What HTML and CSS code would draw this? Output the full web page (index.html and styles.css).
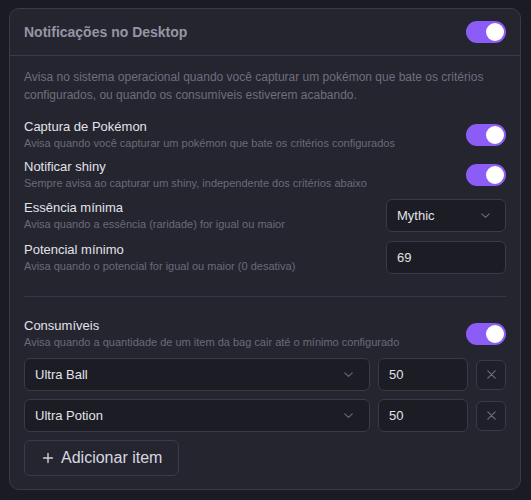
FILE: index.html
```html
<!DOCTYPE html>
<html lang="pt-BR">
<head>
<meta charset="utf-8">
<title>Notificações no Desktop</title>
<link rel="stylesheet" href="styles.css">
</head>
<body>
<section class="card">
  <header class="card-header">
    <h2 class="title">Notificações no Desktop</h2>
    <span class="toggle on"><span class="knob"></span></span>
  </header>
  <div class="card-body">
    <p class="desc">Avisa no sistema operacional quando você capturar um pokémon que bate os critérios configurados, ou quando os consumíveis estiverem acabando.</p>

    <div class="settings">
      <div class="row">
        <div class="text">
          <div class="label">Captura de Pokémon</div>
          <div class="sub">Avisa quando você capturar um pokémon que bate os critérios configurados</div>
        </div>
        <span class="toggle on"><span class="knob"></span></span>
      </div>
      <div class="row">
        <div class="text">
          <div class="label">Notificar shiny</div>
          <div class="sub">Sempre avisa ao capturar um shiny, independente dos critérios abaixo</div>
        </div>
        <span class="toggle on"><span class="knob"></span></span>
      </div>
      <div class="row">
        <div class="text">
          <div class="label">Essência mínima</div>
          <div class="sub">Avisa quando a essência (raridade) for igual ou maior</div>
        </div>
        <div class="select small">
          <span>Mythic</span>
          <svg class="chev" width="9" height="5" viewBox="0 0 9 5"><path d="M0.8 0.8l3.7 3.5 3.7-3.5" fill="none" stroke="#6c6c7a" stroke-width="1.1" stroke-linecap="round" stroke-linejoin="round"/></svg>
        </div>
      </div>
      <div class="row spaced">
        <div class="text">
          <div class="label">Potencial mínimo</div>
          <div class="sub">Avisa quando o potencial for igual ou maior (0 desativa)</div>
        </div>
        <input class="field small" type="text" value="69">
      </div>
    </div>

    <div class="divider"></div>

    <div class="settings">
      <div class="row">
        <div class="text">
          <div class="label">Consumíveis</div>
          <div class="sub">Avisa quando a quantidade de um item da bag cair até o mínimo configurado</div>
        </div>
        <span class="toggle on"><span class="knob"></span></span>
      </div>
      <div class="item-row">
        <div class="select grow">
          <span>Ultra Ball</span>
          <svg class="chev" width="9" height="5" viewBox="0 0 9 5"><path d="M0.8 0.8l3.7 3.5 3.7-3.5" fill="none" stroke="#6c6c7a" stroke-width="1.1" stroke-linecap="round" stroke-linejoin="round"/></svg>
        </div>
        <input class="field qty" type="text" value="50">
        <button class="remove" type="button" aria-label="Remover">
          <svg width="9" height="9" viewBox="0 0 9 9"><path d="M0.8 0.8l7.4 7.4M8.2 0.8l-7.4 7.4" fill="none" stroke="#6c6c7a" stroke-width="1.2" stroke-linecap="round"/></svg>
        </button>
      </div>
      <div class="item-row">
        <div class="select grow">
          <span>Ultra Potion</span>
          <svg class="chev" width="9" height="5" viewBox="0 0 9 5"><path d="M0.8 0.8l3.7 3.5 3.7-3.5" fill="none" stroke="#6c6c7a" stroke-width="1.1" stroke-linecap="round" stroke-linejoin="round"/></svg>
        </div>
        <input class="field qty" type="text" value="50">
        <button class="remove" type="button" aria-label="Remover">
          <svg width="9" height="9" viewBox="0 0 9 9"><path d="M0.8 0.8l7.4 7.4M8.2 0.8l-7.4 7.4" fill="none" stroke="#6c6c7a" stroke-width="1.2" stroke-linecap="round"/></svg>
        </button>
      </div>
      <div class="add-wrap">
        <button class="add" type="button">
          <svg width="14" height="14" viewBox="0 0 14 14"><path d="M7 2.5v9M2.5 7h9" fill="none" stroke="#cfcfd8" stroke-width="1.4" stroke-linecap="round"/></svg>
          <span>Adicionar item</span>
        </button>
      </div>
    </div>
  </div>
</section>
</body>
</html>
```
FILE: styles.css
```css
* { box-sizing: border-box; }

html, body {
  background: #1b1b24;
}

body {
  margin: 0;
  padding: 8px 10px 0 9px;
  font-family: "Liberation Sans", Arial, sans-serif;
  color: #e2e2e8;
}

.card {
  background: #252530;
  border: 1px solid #3a3a48;
  border-radius: 10px;
}

.card-header {
  display: flex;
  align-items: center;
  justify-content: space-between;
  padding: 12px 14px;
  border-bottom: 1px solid #3a3a48;
}

.title {
  margin: 0;
  font-size: 14px;
  font-weight: bold;
  color: #9595a3;
  line-height: 22px;
}

.card-body {
  padding: 12px 14px 13px;
}

.desc {
  margin: 0 0 15px;
  font-size: 12px;
  line-height: 18px;
  color: #6e6e7c;
}

.settings {
  display: flex;
  flex-direction: column;
  gap: 8px;
}

.row {
  display: flex;
  align-items: center;
  justify-content: space-between;
  min-height: 32px;
}

.row.spaced {
  margin-top: 1px;
}

.label {
  font-size: 13px;
  line-height: 16px;
  color: #e2e2e8;
}

.sub {
  font-size: 11px;
  line-height: 16px;
  color: #6a6a78;
}

.toggle {
  flex: none;
  position: relative;
  width: 40px;
  height: 22px;
  border-radius: 11px;
  background: #3a3a48;
}

.toggle.on {
  background: #8b5cf6;
}

.knob {
  position: absolute;
  top: 2px;
  left: 2px;
  width: 18px;
  height: 18px;
  border-radius: 50%;
  background: #ffffff;
}

.toggle.on .knob {
  left: 20px;
}

.select, .field {
  height: 33px;
  background: #1c1c25;
  border: 1px solid #3a3a48;
  border-radius: 6px;
  font-family: "Liberation Sans", Arial, sans-serif;
  font-size: 13px;
  color: #e2e2e8;
}

.select {
  display: flex;
  align-items: center;
  justify-content: space-between;
  padding: 0 15px 0 10px;
}

.field {
  padding: 0 10px;
  outline: none;
}

.small {
  flex: none;
  width: 120px;
}

.divider {
  height: 1px;
  background: #383845;
  margin: 22px 0 21px;
}

.item-row {
  display: flex;
  align-items: center;
  gap: 8px;
}

.grow {
  flex: 1;
  padding-right: 16px;
}

.qty {
  flex: none;
  width: 90px;
}

.remove {
  flex: none;
  width: 30px;
  height: 30px;
  display: flex;
  align-items: center;
  justify-content: center;
  padding: 0;
  background: #1f1f29;
  border: 1px solid #3a3a48;
  border-radius: 6px;
}

.add-wrap {
  display: flex;
}

.add {
  display: flex;
  align-items: center;
  gap: 6px;
  height: 36px;
  padding: 0 16px;
  background: transparent;
  border: 1px solid #3a3a48;
  border-radius: 6px;
  font-family: "Liberation Sans", Arial, sans-serif;
  font-size: 16px;
  color: #d8d8e0;
}

.chev { flex: none; }
```
